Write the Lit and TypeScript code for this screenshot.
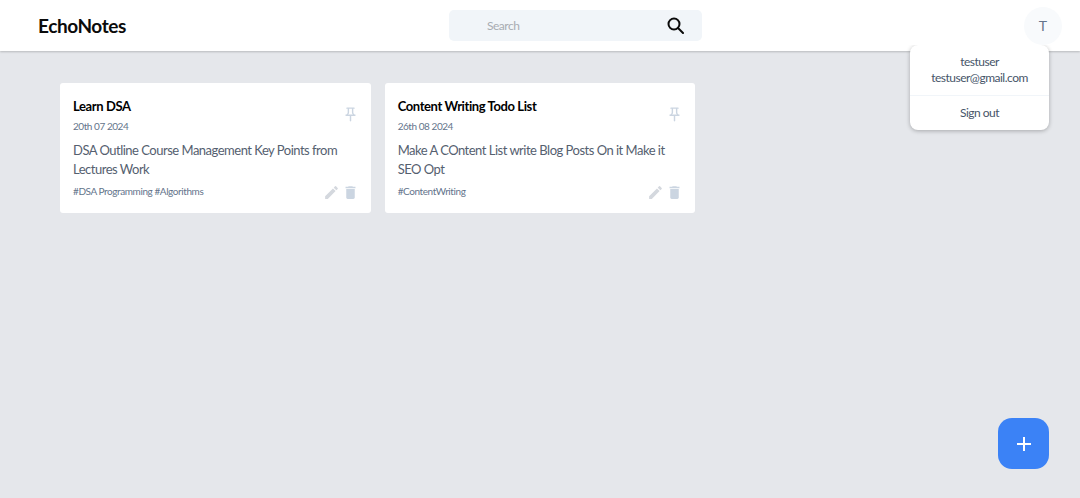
import { LitElement, html, css, svg } from "lit";
import { customElement } from "lit/decorators.js";

const notes = [
  { title: "Learn DSA", date: "20th 07 2024", body: "DSA Outline Course Management Key Points from Lectures Work", tags: "#DSA Programming #Algorithms" },
  { title: "Content Writing Todo List", date: "26th 08 2024", body: "Make A COntent List write Blog Posts On it Make it SEO Opt", tags: "#ContentWriting" },
];

const pin = svg`<path d="M16 9V4h1a1 1 0 0 0 0-2H7a1 1 0 0 0 0 2h1v5c0 1.66-1.34 3-3 3v2h6v7l1 1 1-1v-7h6v-2c-1.66 0-3-1.34-3-3zM8.5 12c.9-.8 1.5-1.9 1.5-3V4h4v5c0 1.1.6 2.2 1.5 3h-7z"/>`;
const pencil = svg`<path d="M3 17.25V21h3.75L17.81 9.94l-3.75-3.75L3 17.25zM20.71 7.04a1 1 0 0 0 0-1.41l-2.34-2.34a1 1 0 0 0-1.41 0l-1.83 1.83 3.75 3.75 1.83-1.83z"/>`;
const trash = svg`<path d="M6 19c0 1.1.9 2 2 2h8c1.1 0 2-.9 2-2V7H6v12zM19 4h-3.5l-1-1h-5l-1 1H5v2h14V4z"/>`;

@customElement("app-root")
export class AppRoot extends LitElement {
  static styles = css`
    :host {
      display: block;
      height: 498px;
      overflow: hidden;
      position: relative;
      background: #e5e7eb;
      font-family: "Lato", "Open Sans", sans-serif;
      color: #000;
    }
    .nav {
      height: 51px;
      box-sizing: border-box;
      background: #fff;
      box-shadow: 0 1px 2px rgba(0, 0, 0, 0.2);
      display: grid;
      grid-template-columns: 411px 253px 1fr;
      align-items: center;
      padding: 0 18px 0 38px;
    }
    .logo {
      font-size: 19px;
      font-weight: 700;
      letter-spacing: -0.4px;
      color: #0b0b0b;
    }
    .search {
      height: 31px;
      background: #f1f5f9;
      border-radius: 5px;
      display: flex;
      align-items: center;
      justify-content: space-between;
      padding: 0 18px 0 38px;
      font-size: 12px;
      letter-spacing: -0.5px;
      color: #a8acb2;
    }
    .search svg { display: block; }
    .avatar {
      justify-self: end;
      width: 38px;
      height: 38px;
      border-radius: 50%;
      background: #f8fafc;
      display: flex;
      align-items: center;
      justify-content: center;
      font-size: 14px;
      color: #64748b;
    }
    .menu {
      position: absolute;
      left: 910px;
      top: 45px;
      width: 139px;
      height: 85px;
      box-sizing: border-box;
      background: #fff;
      border-radius: 8px;
      box-shadow: 0 1px 4px rgba(0, 0, 0, 0.28);
      clip-path: inset(0 -8px -8px -8px);
      font-size: 12px;
      line-height: 16px;
      letter-spacing: -0.5px;
      color: #475569;
      text-align: center;
      display: flex;
      flex-direction: column;
    }
    .who {
      padding-top: 9px;
      height: 51px;
      box-sizing: border-box;
      border-bottom: 1px solid #f1f5f9;
    }
    .out { padding-top: 9px; }
    .grid {
      display: grid;
      grid-template-columns: 310.67px 310.67px;
      gap: 14px;
      padding: 32px 0 0 60px;
    }
    .card {
      height: 130px;
      box-sizing: border-box;
      background: #fff;
      border-radius: 3px;
      padding: 14px 13px 0;
      display: flex;
      flex-direction: column;
    }
    .head {
      display: flex;
      justify-content: space-between;
      align-items: center;
    }
    .title {
      font-size: 13px;
      font-weight: 700;
      line-height: 18px;
      letter-spacing: -0.4px;
      color: #000;
    }
    .date {
      font-size: 10px;
      line-height: 14px;
      margin-top: 4px;
      letter-spacing: -0.45px;
      color: #64748b;
    }
    .body {
      font-size: 13px;
      line-height: 19px;
      letter-spacing: -0.5px;
      color: #55606f;
      margin-top: 8px;
      height: 38px;
    }
    .foot {
      display: flex;
      justify-content: space-between;
      align-items: center;
      margin-top: 4.5px;
    }
    .tags {
      font-size: 10px;
      letter-spacing: -0.42px;
      margin-top: -2px;
      color: #64748b;
    }
    .icons {
      display: flex;
      gap: 2px;
      margin-right: -1px;
    }
    svg.ic { display: block; }
    .pin { fill: #cbd5e1; margin: -1px -1px 0 0; }
    .pen { fill: #d4d8de; }
    .del { fill: #cbd5e1; }
    .fab {
      position: absolute;
      left: 998.3px;
      top: 418.3px;
      width: 51px;
      height: 51px;
      border-radius: 14px;
      background: #3b82f6;
      display: flex;
      align-items: center;
      justify-content: center;
    }
  `;

  render() {
    return html`
      <div class="nav">
        <div class="logo">EchoNotes</div>
        <div class="search">
          <span>Search</span>
          <svg width="17" height="17" viewBox="0 0 17 17" fill="none" stroke="#0a0a0a" stroke-width="2">
            <circle cx="7" cy="7" r="5.5"></circle>
            <path d="M11 11l5 5" stroke-linecap="round"></path>
          </svg>
        </div>
        <div class="avatar">T</div>
      </div>
      <div class="menu">
        <div class="who">testuser<br />testuser@gmail.com</div>
        <div class="out">Sign out</div>
      </div>
      <div class="grid">
        ${notes.map(
          (n) => html`
            <div class="card">
              <div class="head">
                <div>
                  <div class="title">${n.title}</div>
                  <div class="date">${n.date}</div>
                </div>
                <svg class="ic pin" width="17" height="17" viewBox="0 0 24 24">${pin}</svg>
              </div>
              <div class="body">${n.body}</div>
              <div class="foot">
                <div class="tags">${n.tags}</div>
                <div class="icons">
                  <svg class="ic pen" width="17" height="17" viewBox="0 0 24 24">${pencil}</svg>
                  <svg class="ic del" width="17" height="17" viewBox="0 0 24 24">${trash}</svg>
                </div>
              </div>
            </div>
          `
        )}
      </div>
      <div class="fab">
        <svg width="16" height="16" viewBox="0 0 16 16" stroke="#fff" stroke-width="2"><path d="M8 1v14M1 8h14"></path></svg>
      </div>
    `;
  }
}
